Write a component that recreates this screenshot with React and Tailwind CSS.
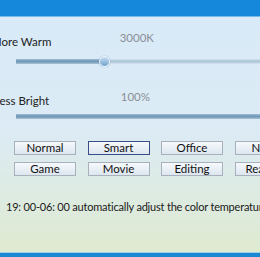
import React from "react";

const presets = ["Normal", "Smart", "Office", "Night", "Game", "Movie", "Editing", "Reading"];

function Slider({ value, thumb }) {
  return (
    <div className="relative ml-[16px] h-[10px] flex items-center">
      <div className="w-full h-[5px] flex">
        <div
          className="h-full bg-gradient-to-b from-[#9dbbd2] via-[#6e97b6] to-[#a9c3d6]"
          style={{ width: `${value}%` }}
        />
        <div className="h-full flex-1 bg-gradient-to-b from-[#d2e1ec] via-[#aac4d8] to-[#d6e4ee]" />
      </div>
      {thumb && (
        <div
          className="absolute top-0 w-[11px] h-[11px] -ml-[5px] rounded-full border border-[#f4f9ff] bg-gradient-to-b from-[#c7def1] to-[#6fa2cc] shadow-[0_0_1px_#4f7fa6]"
          style={{ left: `${value}%` }}
        />
      )}
    </div>
  );
}

export default function App() {
  return (
    <div className="w-[260px] h-[257px] overflow-hidden flex flex-col font-['Lato','Open_Sans',sans-serif] text-[11.5px]">
      <div className="h-[17px] shrink-0 bg-[#1688dc] border-b border-[#78bbe9]" />
      <div className="flex-1 flex flex-col bg-gradient-to-b from-[#d9eaf8] via-[#dcebf4] to-[#dfead0]">
        <div className="flex items-start pt-[14px] h-[34px]">
          <span className="-ml-[9px] mt-[4px] text-[#222] leading-[14px]">More Warm</span>
          <span className="ml-auto mr-[106px] text-[#8a8f96] leading-[14px]">3000K</span>
        </div>
        <div className="mt-[5px]">
          <Slider value={36} thumb />
        </div>
        <div className="flex items-start mt-[24px] h-[20px]">
          <span className="-ml-[6px] mt-[4px] text-[#222] leading-[14px]">Less Bright</span>
          <span className="ml-auto mr-[110px] text-[#8a8f96] leading-[14px]">100%</span>
        </div>
        <div className="mt-[1px]">
          <Slider value={100} />
        </div>
        <div className="grid grid-cols-[62px_62px_62px_62px] gap-x-[11.5px] gap-y-[7px] ml-[14px] mt-[20px]">
          {presets.map((p) => (
            <button
              key={p}
              className={`h-[14px] border ${p === "Smart" ? "border-[#3a4d86]" : "border-[#a7b0bb]"} bg-gradient-to-b from-[#f6f9fc] to-[#dde6ef] text-[#111] text-[11.5px] leading-[12px] text-center`}
            >
              {p}
            </button>
          ))}
        </div>
        <div className="ml-[6px] mt-[24px] whitespace-nowrap text-[#1a1a1a] text-[11px] tracking-[-0.2px] leading-[14px]">
          19: 00-06: 00 automatically adjust the color temperature
        </div>
      </div>
      <div className="h-[5px] shrink-0 bg-[#1a87d2] border-t border-[#9fd0e8]" />
    </div>
  );
}
